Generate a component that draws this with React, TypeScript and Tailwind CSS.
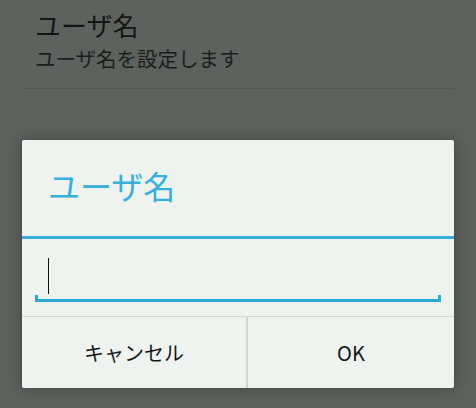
import React from "react";

const jp = "font-['Noto_Sans_CJK_JP','Noto_Sans',sans-serif]";

export default function App() {
  return (
    <div className={`w-[476px] h-[408px] overflow-hidden bg-[#5e625e] ${jp}`}>
      {/* 設定項目 */}
      <div className="h-[88px] pl-[35px] pt-[9px]">
        <div className="text-[26px] leading-[31px] text-[#141614]">ユーザ名</div>
        <div className="mt-[5px] text-[20.5px] leading-[26px] text-[#1c1e1c]">
          ユーザ名を設定します
        </div>
      </div>
      <div className="mx-[22px] h-px bg-[#535753]" />

      {/* ダイアログ */}
      <div className="mx-[22px] mt-[51px] h-[248px] flex flex-col bg-[#eff3f0] rounded-[2px] shadow-[0_0_14px_rgba(0,0,0,0.35)]">
        <div className="h-[96px] flex items-center pl-[26px] pb-[6px]">
          <span className="text-[32px] leading-none text-[#33b0dc]">ユーザ名</span>
        </div>
        <div className="h-[3px] bg-[#33b0dc]" />
        <div className="h-[77px] px-[13px] pt-[19px]">
          <div className="relative h-[44px]">
            <div className="absolute left-[13px] top-0 w-px h-[36px] bg-[#111]" />
            <div className="absolute left-0 right-0 bottom-0 h-[3px] bg-[#2ba8d6]" />
            <div className="absolute left-0 bottom-0 w-[3px] h-[7px] bg-[#2ba8d6]" />
            <div className="absolute right-0 bottom-0 w-[3px] h-[7px] bg-[#2ba8d6]" />
          </div>
        </div>
        <div className="flex-1 flex border-t border-[#d3d6d3]">
          <button className="w-[226px] flex items-center justify-center text-[20px] text-[#151715] border-r-2 border-[#d3d6d3]">
            キャンセル
          </button>
          <button className="flex-1 flex items-center justify-center text-[20px] text-[#151715]">
            OK
          </button>
        </div>
      </div>
    </div>
  );
}
